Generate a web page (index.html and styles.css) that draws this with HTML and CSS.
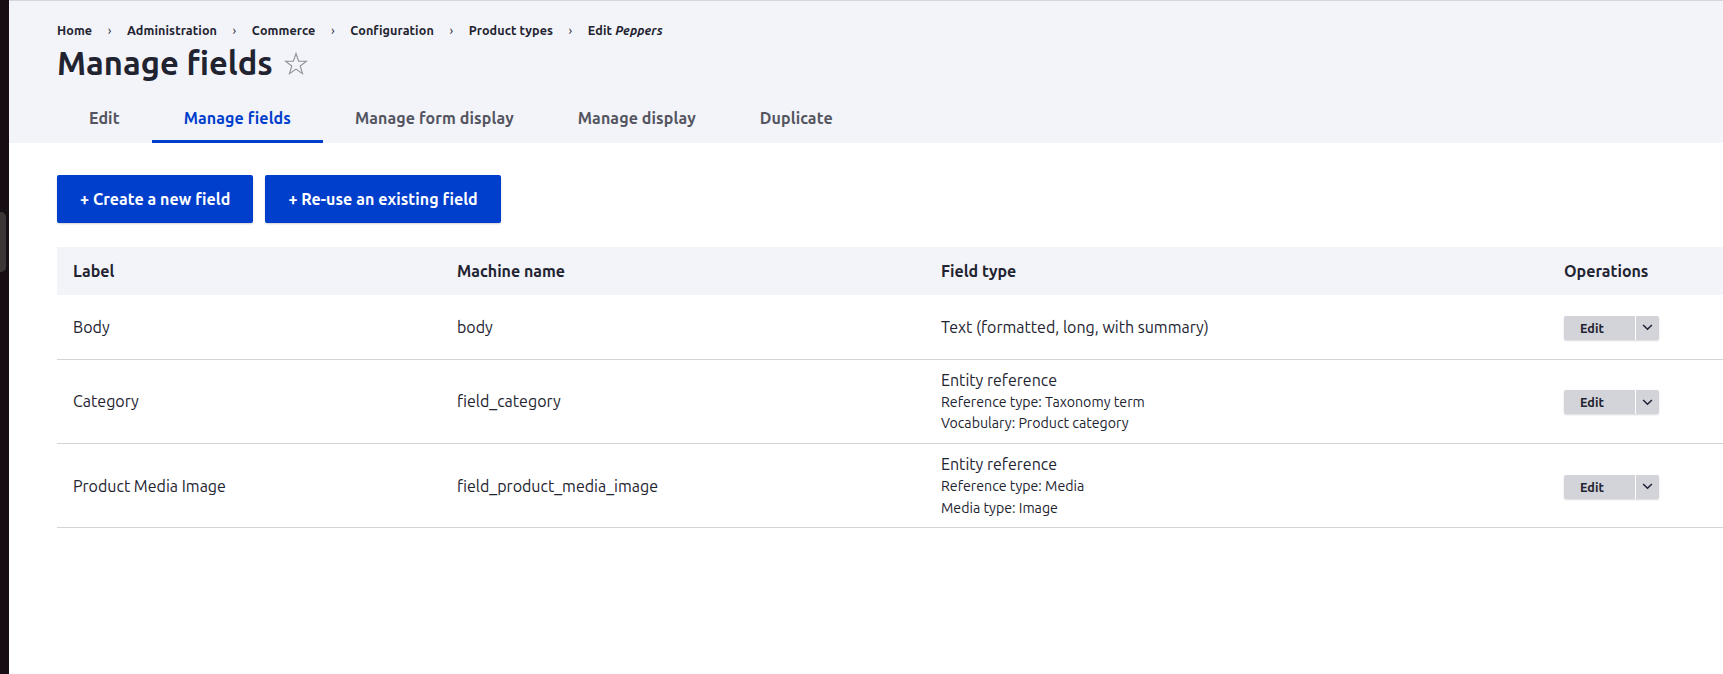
FILE: index.html
```html
<!DOCTYPE html>
<html lang="en">
<head>
<meta charset="utf-8">
<title>Manage fields</title>
<link rel="stylesheet" href="styles.css">
</head>
<body>
<div class="screen">
  <div class="desk">
    <div class="desk-bump"></div>
  </div>
  <div class="page">
    <header class="page-head">
      <nav class="crumbs">
        <a class="crumb">Home</a><span class="sep">›</span>
        <a class="crumb">Administration</a><span class="sep">›</span>
        <a class="crumb">Commerce</a><span class="sep">›</span>
        <a class="crumb">Configuration</a><span class="sep">›</span>
        <a class="crumb">Product types</a><span class="sep">›</span>
        <a class="crumb">Edit <em>Peppers</em></a>
      </nav>
      <div class="title-row">
        <h1 class="title">Manage fields</h1>
        <svg class="star" viewBox="0 0 24 24" width="24" height="24" aria-hidden="true">
          <polygon points="12,1.5 14.6,9.1 22.6,9.2 16.2,14 18.5,21.7 12,17.1 5.5,21.7 7.8,14 1.4,9.2 9.4,9.1" fill="none" stroke="#8d909a" stroke-width="1.1" stroke-linejoin="miter"/>
        </svg>
      </div>
      <ul class="tabs">
        <li class="tab">Edit</li>
        <li class="tab active">Manage fields</li>
        <li class="tab">Manage form display</li>
        <li class="tab">Manage display</li>
        <li class="tab">Duplicate</li>
      </ul>
    </header>
    <main class="content">
      <div class="actions">
        <a class="btn">+ Create a new field</a>
        <a class="btn">+ Re-use an existing field</a>
      </div>
      <table class="fields">
        <colgroup>
          <col class="c-label"><col class="c-machine"><col class="c-type"><col class="c-ops">
        </colgroup>
        <thead>
          <tr><th>Label</th><th>Machine name</th><th>Field type</th><th>Operations</th></tr>
        </thead>
        <tbody>
          <tr>
            <td>Body</td>
            <td>body</td>
            <td>Text (formatted, long, with summary)</td>
            <td><div class="drop"><span class="drop-main">Edit</span><span class="drop-toggle"><svg viewBox="0 0 12 8" width="11" height="7"><path d="M1 1.2 L6 6 L11 1.2" fill="none" stroke="#1f2136" stroke-width="1.8"/></svg></span></div></td>
          </tr>
          <tr>
            <td>Category</td>
            <td>field_category</td>
            <td><div class="type-main">Entity reference</div><div class="type-sub">Reference type: Taxonomy term</div><div class="type-sub">Vocabulary: Product category</div></td>
            <td><div class="drop"><span class="drop-main">Edit</span><span class="drop-toggle"><svg viewBox="0 0 12 8" width="11" height="7"><path d="M1 1.2 L6 6 L11 1.2" fill="none" stroke="#1f2136" stroke-width="1.8"/></svg></span></div></td>
          </tr>
          <tr>
            <td>Product Media Image</td>
            <td>field_product_media_image</td>
            <td><div class="type-main">Entity reference</div><div class="type-sub">Reference type: Media</div><div class="type-sub">Media type: Image</div></td>
            <td><div class="drop"><span class="drop-main">Edit</span><span class="drop-toggle"><svg viewBox="0 0 12 8" width="11" height="7"><path d="M1 1.2 L6 6 L11 1.2" fill="none" stroke="#1f2136" stroke-width="1.8"/></svg></span></div></td>
          </tr>
        </tbody>
      </table>
    </main>
  </div>
</div>
</body>
</html>
```
FILE: styles.css
```css
html, body {
  margin: 0;
  padding: 0;
  background: #ffffff;
}
body {
  width: 1723px;
  height: 674px;
  overflow: hidden;
  font-family: "Ubuntu", Lato, "Noto Sans", sans-serif;
  color: #222330;
  font-size: 16px;
}
.screen {
  display: flex;
  height: 674px;
}
.desk {
  width: 9px;
  flex: none;
  background: #160e12;
  display: flex;
  flex-direction: column;
}
.desk-bump {
  margin-top: 212px;
  width: 6px;
  height: 60px;
  background: #3b3536;
  border-radius: 0 5px 5px 0;
}
.page {
  flex: 1;
  min-width: 0;
  overflow: hidden;
}
.page-head {
  background: #f3f4f9;
  border-top: 1px solid #d6d7de;
  padding-left: 48px;
  height: 142px;
  display: flex;
  flex-direction: column;
}
.crumbs {
  margin-top: 19px;
  height: 20px;
  line-height: 20px;
  font-size: 12.6px;
  font-weight: 700;
  color: #222330;
  display: flex;
  align-items: center;
  letter-spacing: 0.1px;
}
.crumb em {
  font-style: italic;
}
.sep {
  font-weight: 400;
  padding: 0 15.5px;
  font-size: 13px;
}
.title-row {
  display: flex;
  align-items: center;
  height: 40px;
  margin-top: 3px;
}
.title {
  margin: 0;
  font-size: 32.7px;
  line-height: 40px;
  font-weight: 700;
  color: #222330;
  letter-spacing: 0;
}
.star {
  margin-left: 11px;
  margin-top: 2px;
}
.tabs {
  list-style: none;
  margin: 12px 0 0;
  padding: 0;
  display: flex;
  height: 48px;
}
.tab {
  padding: 0 32px;
  height: 48px;
  line-height: 47px;
  font-weight: 700;
  font-size: 16px;
  letter-spacing: 0.1px;
  color: #545560;
  box-sizing: border-box;
}
.tab.active {
  color: #003ecc;
  border-bottom: 3px solid #003ecc;
}
.content {
  padding: 32px 0 0 48px;
}
.actions {
  display: flex;
  gap: 12px;
}
.btn {
  display: flex;
  align-items: center;
  height: 48px;
  padding: 0 23px;
  background: #003ecc;
  color: #ffffff;
  font-weight: 700;
  font-size: 16px;
  letter-spacing: 0.05px;
  border-radius: 2px;
  box-shadow: 0 1px 2px rgba(0, 0, 0, 0.18);
}
.fields {
  margin-top: 24px;
  border-collapse: collapse;
  width: 1720px;
  table-layout: fixed;
}
.c-label { width: 384px; }
.c-machine { width: 484px; }
.c-type { width: 623px; }
.fields th {
  background: #f3f4f9;
  height: 48px;
  padding: 0 16px;
  text-align: left;
  font-weight: 700;
  font-size: 16px;
  color: #222330;
}
.fields td {
  height: 64px;
  padding: 8px 16px;
  border-bottom: 1px solid #d3d4d9;
  line-height: 24px;
  vertical-align: middle;
  box-sizing: border-box;
}
.type-main {
  line-height: 24px;
}
.type-sub {
  font-size: 14.2px;
  line-height: 21.7px;
}
.drop {
  display: inline-flex;
  height: 24px;
  background: #d3d4d9;
  border-radius: 2px;
  box-shadow: 0 1px 2px rgba(0, 0, 0, 0.15);
  vertical-align: middle;
}
.drop-main {
  width: 72px;
  box-sizing: border-box;
  padding-left: 16px;
  font-size: 12.6px;
  font-weight: 700;
  line-height: 24px;
  color: #222330;
  border-right: 1px solid #ffffff;
}
.drop-toggle {
  width: 23px;
  display: flex;
  align-items: center;
  justify-content: center;
}
```
